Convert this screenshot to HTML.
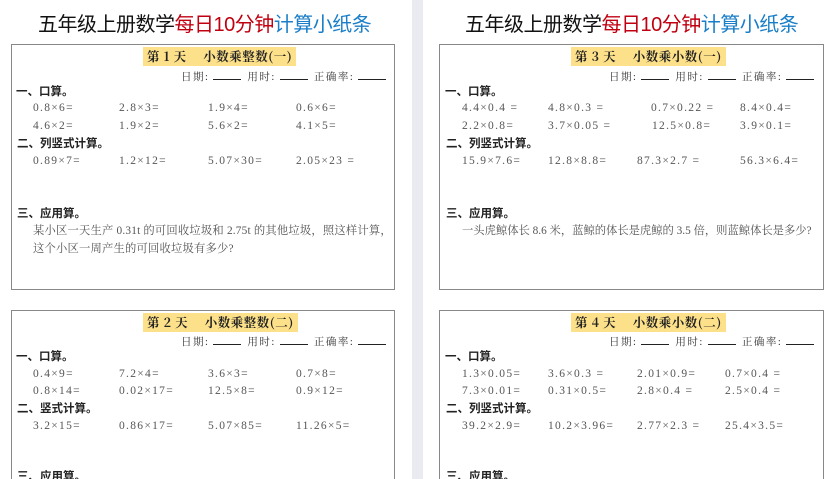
<!DOCTYPE html>
<html><head><meta charset="utf-8"><style>
*{margin:0;padding:0;box-sizing:border-box}
html,body{width:840px;height:479px;overflow:hidden}
body{background:#fff;position:relative;font-family:"Liberation Serif","Noto Serif CJK SC",serif;color:#333}
.gut{position:absolute;left:412px;top:0;width:11px;height:479px;background:#e9ebf0}
.t{position:absolute;top:8px;font-family:"Liberation Sans","Noto Sans CJK SC",sans-serif;font-size:20px;white-space:nowrap;color:#111;letter-spacing:-0.5px}
.t .r{color:#c00010}.t .b{color:#1a7ec8}
.box{position:absolute;border:1px solid #888;background:#fff}
a{position:absolute;white-space:nowrap;font-size:11.5px;line-height:14px;text-decoration:none;color:#555;letter-spacing:1.3px}
.h{font-family:"Liberation Sans","Noto Sans CJK SC",sans-serif;font-weight:bold;color:#222;font-size:11.5px;letter-spacing:0}
.bd{background:#fde08a;font-weight:bold;color:#222;font-size:12.5px;height:19px;line-height:19px;padding:0 4px;font-family:"Noto Serif CJK SC",serif;letter-spacing:0.5px}
.u{display:inline-block;width:28px;border-bottom:1px solid #222;margin:0 6px 0 4px;height:10px}
.d{font-size:10.5px;color:#333;letter-spacing:1.5px}
.p{font-size:11.3px;letter-spacing:0.2px}
</style></head><body>
<div class="gut"></div>
<div class="t" style="left:38px">五年级上册数学<span class="r">每日10分钟</span><span class="b">计算小纸条</span></div>
<div class="t" style="left:465px">五年级上册数学<span class="r">每日10分钟</span><span class="b">计算小纸条</span></div>

<div class="box" style="left:11px;top:44px;width:384px;height:246px"></div>
<div class="box" style="left:11px;top:310px;width:384px;height:180px"></div>
<div class="box" style="left:439px;top:44px;width:385px;height:246px"></div>
<div class="box" style="left:439px;top:310px;width:385px;height:180px"></div>

<!-- box1 -->
<a class="bd" style="left:143px;top:47px">第 1 天　 小数乘整数(一)</a>
<a class="d" style="left:181px;top:70px">日期:<span class="u"></span>用时:<span class="u"></span>正确率:<span class="u"></span></a>
<a class="h" style="left:16px;top:85px">一、口算。</a>
<a style="left:33px;top:101px">0.8×6=</a><a style="left:119px;top:101px">2.8×3=</a><a style="left:208px;top:101px">1.9×4=</a><a style="left:296px;top:101px">0.6×6=</a>
<a style="left:33px;top:119px">4.6×2=</a><a style="left:119px;top:119px">1.9×2=</a><a style="left:208px;top:119px">5.6×2=</a><a style="left:296px;top:119px">4.1×5=</a>
<a class="h" style="left:17px;top:137px">二、列竖式计算。</a>
<a style="left:33px;top:154px">0.89×7=</a><a style="left:119px;top:154px">1.2×12=</a><a style="left:208px;top:154px">5.07×30=</a><a style="left:296px;top:154px">2.05×23 =</a>
<a class="h" style="left:17px;top:207px">三、应用算。</a>
<a class="p" style="left:33px;top:224px">某小区一天生产 0.31t 的可回收垃圾和 2.75t 的其他垃圾，照这样计算，</a>
<a class="p" style="left:33px;top:242px">这个小区一周产生的可回收垃圾有多少?</a>

<!-- box2 -->
<a class="bd" style="left:143px;top:313px">第 2 天　 小数乘整数(二)</a>
<a class="d" style="left:181px;top:335px">日期:<span class="u"></span>用时:<span class="u"></span>正确率:<span class="u"></span></a>
<a class="h" style="left:16px;top:350px">一、口算。</a>
<a style="left:33px;top:367px">0.4×9=</a><a style="left:119px;top:367px">7.2×4=</a><a style="left:208px;top:367px">3.6×3=</a><a style="left:296px;top:367px">0.7×8=</a>
<a style="left:33px;top:384px">0.8×14=</a><a style="left:119px;top:384px">0.02×17=</a><a style="left:208px;top:384px">12.5×8=</a><a style="left:296px;top:384px">0.9×12=</a>
<a class="h" style="left:17px;top:402px">二、竖式计算。</a>
<a style="left:33px;top:419px">3.2×15=</a><a style="left:119px;top:419px">0.86×17=</a><a style="left:208px;top:419px">5.07×85=</a><a style="left:296px;top:419px">11.26×5=</a>
<a class="h" style="left:17px;top:470px">三、应用算。</a>

<!-- box3 -->
<a class="bd" style="left:571px;top:47px">第 3 天　 小数乘小数(一)</a>
<a class="d" style="left:609px;top:70px">日期:<span class="u"></span>用时:<span class="u"></span>正确率:<span class="u"></span></a>
<a class="h" style="left:445px;top:85px">一、口算。</a>
<a style="left:462px;top:101px">4.4×0.4 =</a><a style="left:548px;top:101px">4.8×0.3 =</a><a style="left:651px;top:101px">0.7×0.22 =</a><a style="left:740px;top:101px">8.4×0.4=</a>
<a style="left:462px;top:119px">2.2×0.8=</a><a style="left:548px;top:119px">3.7×0.05 =</a><a style="left:652px;top:119px">12.5×0.8=</a><a style="left:740px;top:119px">3.9×0.1=</a>
<a class="h" style="left:446px;top:137px">二、列竖式计算。</a>
<a style="left:462px;top:154px">15.9×7.6=</a><a style="left:548px;top:154px">12.8×8.8=</a><a style="left:637px;top:154px">87.3×2.7 =</a><a style="left:740px;top:154px">56.3×6.4=</a>
<a class="h" style="left:446px;top:207px">三、应用算。</a>
<a class="p" style="left:462px;top:224px;letter-spacing:0">一头虎鲸体长 8.6 米，蓝鲸的体长是虎鲸的 3.5 倍，则蓝鲸体长是多少?</a>

<!-- box4 -->
<a class="bd" style="left:571px;top:313px">第 4 天　 小数乘小数(二)</a>
<a class="d" style="left:609px;top:335px">日期:<span class="u"></span>用时:<span class="u"></span>正确率:<span class="u"></span></a>
<a class="h" style="left:445px;top:350px">一、口算。</a>
<a style="left:462px;top:367px">1.3×0.05=</a><a style="left:548px;top:367px">3.6×0.3 =</a><a style="left:637px;top:367px">2.01×0.9=</a><a style="left:725px;top:367px">0.7×0.4 =</a>
<a style="left:462px;top:384px">7.3×0.01=</a><a style="left:548px;top:384px">0.31×0.5=</a><a style="left:637px;top:384px">2.8×0.4 =</a><a style="left:725px;top:384px">2.5×0.4 =</a>
<a class="h" style="left:446px;top:402px">二、列竖式计算。</a>
<a style="left:462px;top:419px">39.2×2.9=</a><a style="left:548px;top:419px">10.2×3.96=</a><a style="left:637px;top:419px">2.77×2.3 =</a><a style="left:725px;top:419px">25.4×3.5=</a>
<a class="h" style="left:446px;top:470px">三、应用算。</a>
</body></html>
